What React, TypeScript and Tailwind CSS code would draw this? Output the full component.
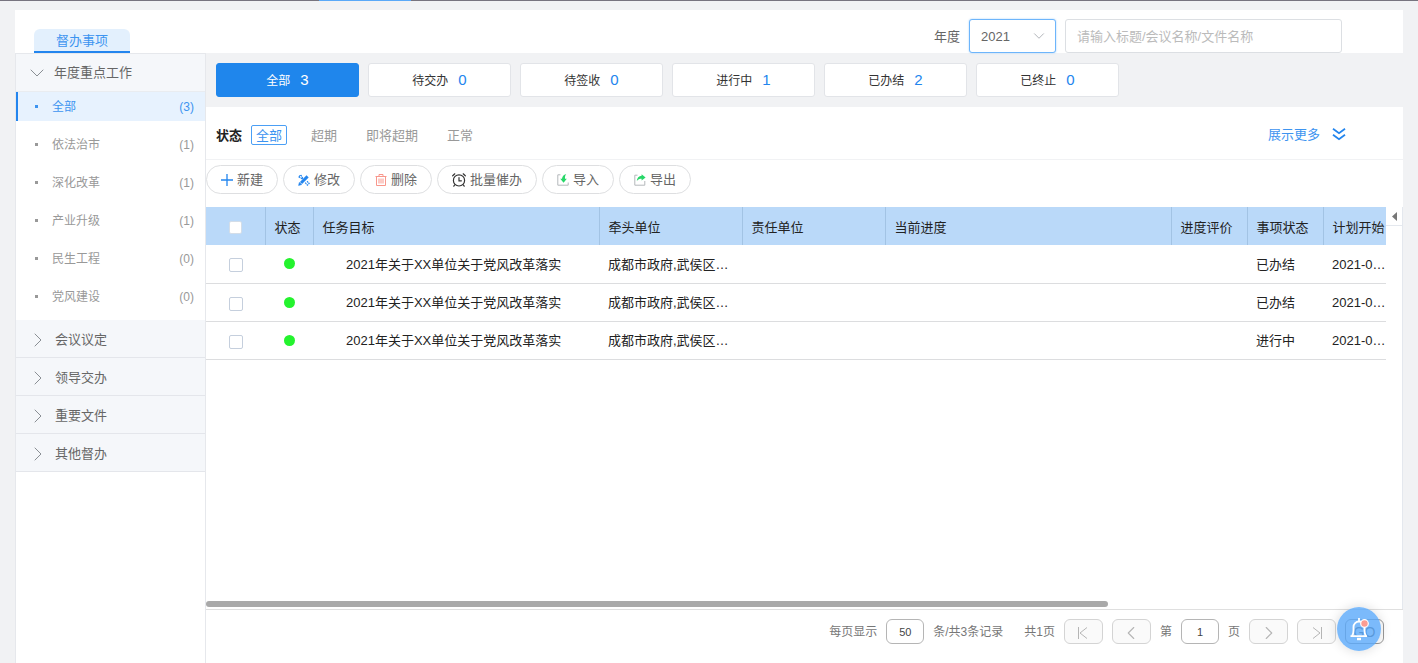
import React, { useState } from 'react';
import { ChevronDown, ChevronRight, ChevronLeft } from 'lucide-react';

interface Category {
  name: string;
  count: number;
}

interface Task {
  id: number;
  title: string;
  leadUnit: string;
  state: string;
  planStart: string;
}

const CATEGORIES: Category[] = [
  { name: '全部', count: 3 },
  { name: '依法治市', count: 1 },
  { name: '深化改革', count: 1 },
  { name: '产业升级', count: 1 },
  { name: '民生工程', count: 0 },
  { name: '党风建设', count: 0 },
];

const GROUPS = ['会议议定', '领导交办', '重要文件', '其他督办'];

const STAGES: Category[] = [
  { name: '全部', count: 3 },
  { name: '待交办', count: 0 },
  { name: '待签收', count: 0 },
  { name: '进行中', count: 1 },
  { name: '已办结', count: 2 },
  { name: '已终止', count: 0 },
];

const FILTERS = ['全部', '超期', '即将超期', '正常'];

const TASKS: Task[] = [
  { id: 1, title: '2021年关于XX单位关于党风改革落实', leadUnit: '成都市政府,武侯区…', state: '已办结', planStart: '2021-0…' },
  { id: 2, title: '2021年关于XX单位关于党风改革落实', leadUnit: '成都市政府,武侯区…', state: '已办结', planStart: '2021-0…' },
  { id: 3, title: '2021年关于XX单位关于党风改革落实', leadUnit: '成都市政府,武侯区…', state: '进行中', planStart: '2021-0…' },
];

const PlusIcon = () => (
  <svg className="h-3 w-3" viewBox="0 0 12 12" fill="none" stroke="#2385ee" strokeWidth="1.3">
    <path d="M0 6h12M6 0v12" />
  </svg>
);

const EditIcon = () => (
  <svg className="h-3 w-3" viewBox="0 0 12 12" fill="none" stroke="#2385ee">
    <path d="M3 9L9.600 2.400" strokeWidth="3" />
    <path d="M.6 11.400l.8-3 2.200 2.200z" fill="#2385ee" strokeWidth=".6" />
    <path d="M5 4.600L2.800.8.8 2.800 4.400 5M7.200 8.600l2.200 2.600 1.800-1.800L8.800 7" strokeWidth="1.100" strokeDasharray="1.800 .6" />
  </svg>
);

const TrashIcon = () => (
  <svg className="h-3 w-3" viewBox="0 0 12 12" fill="none" stroke="#f8978c">
    <path d="M.5 2.500h11M4 2.500v-2h4v2M1.500 2.500v9h9v-9M4 4.500v5M6 4.500v5M8 4.500v5" />
  </svg>
);

const AlarmIcon = () => (
  <svg className="h-3.5 w-3.5" viewBox="0 0 14 14" fill="none" stroke="#333" strokeWidth="1.2" strokeLinecap="round">
    <circle cx="7" cy="7.400" r="5.600" />
    <path d="M7 4.600v3.200h2.400M.7 2.800L2.800.8M13.300 2.800L11.200.8M2.600 12l-.8 1.200M11.400 12l.8 1.200" />
  </svg>
);

const ImportIcon = () => (
  <svg className="h-3 w-3" viewBox="0 0 12 12" fill="none">
    <path d="M3.500.8H.8v10.400h10.400V8.500" stroke="#b4b8bb" />
    <path d="M9.200 0C6.600.8 5.200 2.400 5 4.800H3.200l3.400 4 3.200-4H8C7.800 3 8.200 1.400 9.200 0z" fill="#27d768" />
  </svg>
);

const ExportIcon = () => (
  <svg className="h-3 w-3" viewBox="0 0 12 12" fill="none">
    <path d="M3.500 1.200H.8v10h10V7" stroke="#b4b8bb" />
    <path d="M2.800 7c.2-3 2-5 4.800-5.200V.2l4 3.200-4 3.200V4.800C5.600 4.800 4 5.400 2.800 7z" fill="#27d768" />
  </svg>
);

const ACTIONS = [
  { label: '新建', icon: <PlusIcon /> },
  { label: '修改', icon: <EditIcon /> },
  { label: '删除', icon: <TrashIcon /> },
  { label: '批量催办', icon: <AlarmIcon /> },
  { label: '导入', icon: <ImportIcon /> },
  { label: '导出', icon: <ExportIcon /> },
];

const HeaderCell: React.FC<{ children?: React.ReactNode }> = ({ children }) => (
  <th className="border-l border-[#a2c3e4] px-[9px] pt-[3px] text-left font-normal whitespace-nowrap">{children}</th>
);

const Sidebar: React.FC = () => {
  const [active, setActive] = useState('全部');

  return (
    <aside className="w-[191px] shrink-0 border-x border-t border-[#e6e8ec]">
      <button className="flex h-[38px] w-full items-center gap-[5px] border-b border-[#e9ecf0] bg-[#f5f7fa] pt-px pl-[9px] text-[13px] text-[#666]">
        <ChevronDown className="h-6 w-6 text-[#8a8f94]" strokeWidth={1} />
        年度重点工作
      </button>
      <ul className="text-xs">
        {CATEGORIES.map((c) => (
          <li key={c.name} className="pb-[9px]">
            <button
              onClick={() => setActive(c.name)}
              className={`flex h-[29px] w-full items-center border-l-2 pr-[11px] pl-[17px] ${
                active === c.name ? 'border-[#2385ee] bg-[#e7f2fe] text-[#3d94f0]' : 'border-transparent text-[#999]'
              }`}
            >
              <span className="h-[3px] w-[3px] bg-current" />
              <span className="ml-[14px] pt-px">{c.name}</span>
              <span className="ml-auto">({c.count})</span>
            </button>
          </li>
        ))}
      </ul>
      {GROUPS.map((g) => (
        <button
          key={g}
          className="flex h-[38px] w-full items-center gap-[5px] border-b border-[#e4e6eb] bg-[#f5f7fa] pt-0.5 pl-[10px] text-[13px] text-[#666]"
        >
          <ChevronRight className="h-6 w-6 text-[#8a8f94]" strokeWidth={1} />
          {g}
        </button>
      ))}
    </aside>
  );
};

const TaskTable: React.FC = () => (
  <div className="flex-1 overflow-hidden">
    <table className="w-[1545px] table-fixed border-collapse text-[13px] text-[#222]">
      <colgroup>
        <col className="w-[59px]" />
        <col className="w-[48px]" />
        <col className="w-[286px]" />
        <col className="w-[143px]" />
        <col className="w-[143px]" />
        <col className="w-[286px]" />
        <col className="w-[76px]" />
        <col className="w-[76px]" />
        <col className="w-[76px]" />
        <col />
      </colgroup>
      <thead>
        <tr className="h-[38px] bg-[#bad9f9]">
          <th className="pt-0.5">
            <input type="checkbox" aria-label="全选" className="mx-auto block h-[13px] w-[13px] appearance-none rounded-xs border border-[#d3dde8] bg-white" />
          </th>
          <HeaderCell>状态</HeaderCell>
          <HeaderCell>任务目标</HeaderCell>
          <HeaderCell>牵头单位</HeaderCell>
          <HeaderCell>责任单位</HeaderCell>
          <HeaderCell>当前进度</HeaderCell>
          <HeaderCell>进度评价</HeaderCell>
          <HeaderCell>事项状态</HeaderCell>
          <HeaderCell>计划开始</HeaderCell>
          <th />
        </tr>
      </thead>
      <tbody>
        {TASKS.map((t) => (
          <tr key={t.id} className="h-[38px] border-b border-[#dcdddf]">
            <td className="pt-[3px]">
              <input type="checkbox" aria-label={`选择任务 ${t.id}`} className="mx-auto block h-[14px] w-[14px] appearance-none rounded-xs border border-[#c5cfdd] bg-white" />
            </td>
            <td>
              <span className="mx-auto block h-[11px] w-[11px] rounded-full bg-[#24f32e]" />
            </td>
            <td className="pt-0.5 pr-2 pl-[33px] whitespace-nowrap">{t.title}</td>
            <td className="pt-0.5 pl-[9px] whitespace-nowrap">{t.leadUnit}</td>
            <td />
            <td />
            <td />
            <td className="px-[9px] pt-0.5">{t.state}</td>
            <td className="pt-0.5 pl-[9px] whitespace-nowrap">{t.planStart}</td>
            <td />
          </tr>
        ))}
      </tbody>
    </table>
  </div>
);

const PageButton: React.FC<{ label: string; children: React.ReactNode }> = ({ label, children }) => (
  <button
    aria-label={label}
    className="flex h-[25px] w-[39px] items-center justify-center rounded-md border border-[#d4d4d4] bg-[#fafafa] pt-0.5 text-[#b5b5b5]"
  >
    {children}
  </button>
);

const Pagination: React.FC = () => (
  <footer className="flex h-[54px] items-start justify-end gap-[9px] border-t border-[#dfdfdf] pt-[9px] pr-[19px] text-xs text-[#777]">
    <label htmlFor="page-size" className="leading-[26px]">每页显示</label>
    <input id="page-size" defaultValue="50" className="h-[25px] w-[38px] rounded-md border border-[#b5b5b5] text-center text-[11px] text-[#444]" />
    <span className="leading-[26px]">条/共3条记录</span>
    <span className="ml-3 leading-[26px]">共1页</span>
    <PageButton label="首页">
      <svg className="h-3 w-3" viewBox="0 0 12 12" fill="none" stroke="currentColor">
        <path d="M1.500 0v12M10 .5L3 6l7 5.500" />
      </svg>
    </PageButton>
    <PageButton label="上一页">
      <ChevronLeft className="h-[22px] w-[22px]" strokeWidth={1.200} />
    </PageButton>
    <label htmlFor="page-no" className="leading-[26px]">第</label>
    <input id="page-no" defaultValue="1" className="h-[25px] w-[38px] rounded-md border border-[#b5b5b5] text-center text-[11px] text-[#444]" />
    <span className="leading-[26px]">页</span>
    <PageButton label="下一页">
      <ChevronRight className="h-[22px] w-[22px]" strokeWidth={1.200} />
    </PageButton>
    <PageButton label="末页">
      <svg className="h-3 w-3" viewBox="0 0 12 12" fill="none" stroke="currentColor">
        <path d="M10.500 0v12M2 .5L9 6l-7 5.500" />
      </svg>
    </PageButton>
    <button className="h-[25px] w-[39px] rounded-md border border-[#999] text-sm leading-[25px] text-[#555]">GO</button>
  </footer>
);

export default function App() {
  const [stage, setStage] = useState('全部');
  const [filter, setFilter] = useState('全部');

  return (
    <div className="flex min-h-screen flex-col bg-[#f1f2f4] font-['Liberation_Sans','Noto_Sans_CJK_SC',sans-serif]">
      <div className="h-px bg-[#77747f]">
        <div className="ml-[319px] h-px w-[92px] bg-[#5aa9f8]" />
      </div>

      <div className="mx-[15px] mt-[9px] flex flex-1 flex-col bg-white">
        <header className="flex h-[43px] items-end justify-between pr-[61px] pl-[19px]">
          <button className="h-[24px] w-24 rounded-t-md border-b-2 border-[#2385ee] bg-[#e3f0fd] pt-px text-[13px] text-[#3d94f0]">
            督办事项
          </button>
          <div className="flex items-center text-[13px] text-[#666]">
            <label htmlFor="year" className="mr-[9px] pt-0.5">年度</label>
            <div className="relative mr-[9px]">
              <select
                id="year"
                className="h-[34px] w-[87px] appearance-none rounded-[3px] border border-[#6db5fb] bg-white pt-0.5 pl-[11px] shadow-[0_0_2px_#9fcffc]"
              >
                <option>2021</option>
                <option>2020</option>
              </select>
              <ChevronDown className="pointer-events-none absolute top-2 right-2 h-[18px] w-[18px] text-[#b0b3b8]" strokeWidth={1.300} />
            </div>
            <input
              aria-label="搜索"
              placeholder="请输入标题/会议名称/文件名称"
              className="h-[34px] w-[277px] rounded-[3px] border border-[#dcdfe3] px-[11px] placeholder:text-[#bbb]"
            />
          </div>
        </header>

        <div className="flex flex-1">
          <Sidebar />
          <main className="flex min-w-0 flex-1 flex-col">
            <div className="flex gap-[9px] bg-[#f1f2f4] p-[10px]">
              {STAGES.map((s) => (
                <button
                  key={s.name}
                  onClick={() => setStage(s.name)}
                  className={`flex h-[34px] w-[143px] items-center justify-center gap-[10px] rounded-[3px] border text-xs ${
                    stage === s.name ? 'border-[#1f86ec] bg-[#1f86ec] text-white' : 'border-[#e2e4e8] bg-white text-[#333]'
                  }`}
                >
                  <span className="pt-px">{s.name}</span>
                  <span className={`text-[15px] ${stage === s.name ? 'text-white' : 'text-[#2385ee]'}`}>{s.count}</span>
                </button>
              ))}
            </div>

            <div className="flex h-[53px] items-center border-b border-[#f1f2f4] pt-2 pr-[57px] pb-1 pl-[10px] text-[13px]">
              <span className="mr-[9px] pt-px font-bold text-[#222]">状态</span>
              <div className="flex gap-[19px]">
                {FILTERS.map((f) => (
                  <button
                    key={f}
                    onClick={() => setFilter(f)}
                    className={`h-5 rounded-xs border px-1 leading-[19px] ${
                      filter === f ? 'border-[#4b9ff5] text-[#3d94f0]' : 'border-transparent text-[#999]'
                    }`}
                  >
                    {f}
                  </button>
                ))}
              </div>
              <button className="ml-auto flex items-center gap-3 text-[#3d94f0]">
                展示更多
                <svg className="h-3.5 w-3.5" viewBox="0 0 14 14" fill="none" stroke="#2385ee" strokeWidth="1.800">
                  <path d="M1 .8l6 4.400L13 .8M1 6.800l6 4.400 6-4.400" />
                </svg>
              </button>
            </div>

            <div className="flex gap-[5px] py-[5px] text-[13px] text-[#666]">
              {ACTIONS.map((a) => (
                <button key={a.label} className="flex h-[29px] items-center gap-1 rounded-full border border-[#dedfe1] px-[14px]">
                  {a.icon}
                  <span className="pt-px">{a.label}</span>
                </button>
              ))}
            </div>

            <div className="mt-2 flex flex-1">
              <div className="flex min-w-0 flex-1 flex-col">
                <TaskTable />
                <div className="mb-[2px] h-[6px]">
                  <div className="h-full w-[76.4%] rounded-full bg-[#a9a9a9]" />
                </div>
              </div>
              <div className="w-[17px] border-r border-[#e4e8ee]">
                <button aria-label="展开侧栏" className="flex h-[19px] w-full items-center justify-center border-b border-[#e4e8ee]">
                  <svg className="h-[9px] w-[5px]" viewBox="0 0 5 9" fill="#777">
                    <path d="M5 0v9L0 4.500z" />
                  </svg>
                </button>
              </div>
            </div>
            <Pagination />
          </main>
        </div>
      </div>

      <button
        aria-label="消息通知"
        className="fixed right-[37px] bottom-3 flex h-11 w-11 items-center justify-center rounded-full bg-[#5aa9fa]/80 shadow-[0_0_12px_rgba(0,0,0,0.15)]"
      >
        <svg className="h-6 w-6" viewBox="0 0 24 24" fill="none" stroke="#fff" strokeWidth="1.800">
          <path d="M12 1v3M3.500 19.200h16.500M5 19c1.300-1.500 1.500-3 1.500-5.500V10a5.500 5.500 0 0 1 11 0v3.500c0 2.500.2 4 1.500 5.500" />
          <path d="M10 22h4" strokeWidth="2.400" />
          <circle cx="17.500" cy="6.500" r="3.800" fill="#fb9c92" strokeWidth="1.200" />
        </svg>
      </button>
    </div>
  );
}
